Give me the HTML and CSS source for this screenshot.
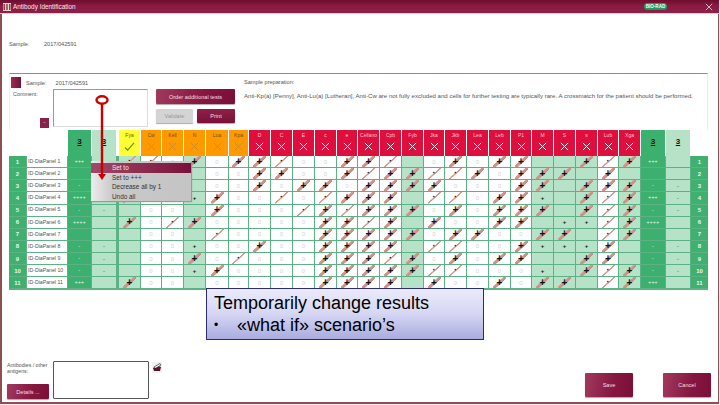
FILE: index.html
```html
<!DOCTYPE html>
<html lang="en">
<head>
<meta charset="utf-8">
<title>Antibody Identification</title>
<link rel="stylesheet" href="styles.css">
</head>
<body>
<svg class="defs" width="0" height="0">
  <symbol id="x" viewBox="0 0 10 10"><path d="M1 1 9 9M9 1 1 9" fill="none" stroke="currentColor" stroke-width="1.1"/></symbol>
</svg>
<div class="window">
  <header class="titlebar">
    <svg class="appicon" viewBox="0 0 8 8"><rect width="8" height="8" fill="#f1d9c9"/><path d="M1.2 1v6M4 1v6M6.8 1v6" stroke="#7d1236" stroke-width="1.2"/></svg>
    <span class="apptitle">Antibody Identification</span>
    <span class="badge">BIO-RAD</span>
    <svg class="close"><use href="#x"/></svg>
  </header>

  <div class="samplebar"><span class="lbl">Sample:</span><span>2017/042591</span></div>

  <section class="panel">
    <div class="left">
      <div class="samplerow"><span class="book"></span><span class="lbl2">Sample:</span><span>2017/042591</span></div>
      <div class="commentrow">
        <div class="commentcol"><span>Comment:</span><span class="minibtn">-</span></div>
        <div class="box commentbox"></div>
        <div class="actions">
          <button class="btn wide">Order additional tests</button>
          <div class="btnrow"><button class="btn off">Validate</button><button class="btn print">Print</button></div>
        </div>
      </div>
    </div>
    <div class="right">
      <div class="preplabel">Sample preparation:</div>
      <p class="preptext">Anti-Kp(a) [Penny], Anti-Lu(a) [Lutheran], Anti-Cw are not fully excluded and cells for further testing are typically rare. A crossmatch for the patient should be performed.</p>
    </div>
  </section>

  <div class="grid head">
    <span></span><span></span>
    <span class="hdark">3</span><span class="hlight">3</span>
    <span class="hy">Fya<svg class="check" viewBox="0 0 12 10"><path d="M1 6 4 9 11 1" fill="none" stroke="#6c9a18" stroke-width="1.5"/></svg></span>
    <span class="ho">Cw<svg><use href="#x"/></svg></span><span class="ho">Kell<svg><use href="#x"/></svg></span><span class="ho">N<svg><use href="#x"/></svg></span><span class="ho">Lua<svg><use href="#x"/></svg></span><span class="ho">Kpa<svg><use href="#x"/></svg></span>
    <span class="hr">D<svg><use href="#x"/></svg></span><span class="hr">C<svg><use href="#x"/></svg></span><span class="hr">E<svg><use href="#x"/></svg></span><span class="hr">c<svg><use href="#x"/></svg></span><span class="hr">e<svg><use href="#x"/></svg></span><span class="hr">Cellano<svg><use href="#x"/></svg></span><span class="hr">Cpb<svg><use href="#x"/></svg></span><span class="hr">Fyb<svg><use href="#x"/></svg></span><span class="hr">Jka<svg><use href="#x"/></svg></span><span class="hr">Jkb<svg><use href="#x"/></svg></span><span class="hr">Lea<svg><use href="#x"/></svg></span><span class="hr">Leb<svg><use href="#x"/></svg></span><span class="hr">P1<svg><use href="#x"/></svg></span><span class="hr">M<svg><use href="#x"/></svg></span><span class="hr">S<svg><use href="#x"/></svg></span><span class="hr">s<svg><use href="#x"/></svg></span><span class="hr">Lub<svg><use href="#x"/></svg></span><span class="hr">Xga<svg><use href="#x"/></svg></span>
    <span class="hdark">3</span><span class="hlight nb">3</span><span></span>
  </div>

  <div class="grid body">
    <i class="n">1</i><i class="nm">ID-DiaPanel 1</i><i class="dk">+++</i><i class="lt"></i><i class="gt">·</i><i class="t">·</i><i class="z">0</i><i class="gs">+</i><i class="z">0</i><i class="s">+</i><i class="s">+</i><i class="t">·</i><i class="z">0</i><i class="z">0</i><i class="s">+</i><i class="s">+</i><i class="t">·</i><i class="e"></i><i class="z">0</i><i class="s">+</i><i class="z">0</i><i class="s">+</i><i class="s">+</i><i class="e"></i><i class="e"></i><i class="gs">+</i><i class="t">·</i><i class="gs">+</i><i class="dk">+++</i><i class="lt nb"></i><i class="n">1</i>
    <i class="n">2</i><i class="nm">ID-DiaPanel 2</i><i class="dk"></i><i class="lt"></i><i class="e"></i><i class="z">0</i><i class="z">0</i><i class="e"></i><i class="z">0</i><i class="z">0</i><i class="s">+</i><i class="s">+</i><i class="z">0</i><i class="z">0</i><i class="s">+</i><i class="t">·</i><i class="s">+</i><i class="gs">+</i><i class="t">·</i><i class="t">·</i><i class="s">+</i><i class="z">0</i><i class="s">+</i><i class="gs">+</i><i class="gs">+</i><i class="e"></i><i class="s">+</i><i class="e"></i><i class="dk"></i><i class="lt nb"></i><i class="n">2</i>
    <i class="n">3</i><i class="nm">ID-DiaPanel 3</i><i class="dk">-</i><i class="lt"></i><i class="e"></i><i class="z">0</i><i class="z">0</i><i class="e"></i><i class="z">0</i><i class="z">0</i><i class="s">+</i><i class="z">0</i><i class="s">+</i><i class="s">+</i><i class="z">0</i><i class="s">+</i><i class="s">+</i><i class="gs">+</i><i class="s">+</i><i class="z">0</i><i class="z">0</i><i class="z">0</i><i class="s">+</i><i class="gs">+</i><i class="e"></i><i class="gs">+</i><i class="s">+</i><i class="gs">+</i><i class="dk">-</i><i class="lt nb">-</i><i class="n">3</i>
    <i class="n">4</i><i class="nm">ID-DiaPanel 4</i><i class="dk">++++</i><i class="lt">-</i><i class="gt">·</i><i class="z">0</i><i class="z">0</i><i class="gp">+</i><i class="s">+</i><i class="z">0</i><i class="z">0</i><i class="t">·</i><i class="z">0</i><i class="t">·</i><i class="s">+</i><i class="s">+</i><i class="s">+</i><i class="e"></i><i class="t">·</i><i class="t">·</i><i class="z">0</i><i class="s">+</i><i class="s">+</i><i class="gp">+</i><i class="e"></i><i class="gs">+</i><i class="t">·</i><i class="gs">+</i><i class="dk">+++</i><i class="lt nb">-</i><i class="n">4</i>
    <i class="n">5</i><i class="nm">ID-DiaPanel 5</i><i class="dk">-</i><i class="lt">-</i><i class="e"></i><i class="z">0</i><i class="z">0</i><i class="e"></i><i class="s">+</i><i class="z">0</i><i class="z">0</i><i class="z">0</i><i class="t">·</i><i class="s">+</i><i class="t">·</i><i class="s">+</i><i class="s">+</i><i class="gs">+</i><i class="z">0</i><i class="s">+</i><i class="z">0</i><i class="s">+</i><i class="s">+</i><i class="gs">+</i><i class="e"></i><i class="gs">+</i><i class="t">·</i><i class="gs">+</i><i class="dk">-</i><i class="lt nb">-</i><i class="n">5</i>
    <i class="n">6</i><i class="nm">ID-DiaPanel 6</i><i class="dk">++++</i><i class="lt"></i><i class="gs">+</i><i class="z">0</i><i class="t">·</i><i class="gs">+</i><i class="z">0</i><i class="z">0</i><i class="z">0</i><i class="z">0</i><i class="z">0</i><i class="s">+</i><i class="s">+</i><i class="t">·</i><i class="s">+</i><i class="e"></i><i class="s">+</i><i class="z">0</i><i class="z">0</i><i class="s">+</i><i class="s">+</i><i class="e"></i><i class="gp">+</i><i class="gp">+</i><i class="t">·</i><i class="gs">+</i><i class="dk">++++</i><i class="lt nb"></i><i class="n">6</i>
    <i class="n">7</i><i class="nm">ID-DiaPanel 7</i><i class="dk"></i><i class="lt"></i><i class="e"></i><i class="z">0</i><i class="z">0</i><i class="e"></i><i class="t">·</i><i class="z">0</i><i class="z">0</i><i class="z">0</i><i class="z">0</i><i class="s">+</i><i class="s">+</i><i class="s">+</i><i class="s">+</i><i class="gs">+</i><i class="z">0</i><i class="s">+</i><i class="s">+</i><i class="z">0</i><i class="z">0</i><i class="gs">+</i><i class="gs">+</i><i class="e"></i><i class="t">·</i><i class="gs">+</i><i class="dk"></i><i class="lt nb"></i><i class="n">7</i>
    <i class="n">8</i><i class="nm">ID-DiaPanel 8</i><i class="dk">-</i><i class="lt">-</i><i class="e"></i><i class="z">0</i><i class="z">0</i><i class="gp">+</i><i class="z">0</i><i class="z">0</i><i class="s">+</i><i class="z">0</i><i class="z">0</i><i class="s">+</i><i class="s">+</i><i class="s">+</i><i class="s">+</i><i class="e"></i><i class="t">·</i><i class="t">·</i><i class="z">0</i><i class="z">0</i><i class="s">+</i><i class="gp">+</i><i class="gp">+</i><i class="gp">+</i><i class="s">+</i><i class="e"></i><i class="dk">-</i><i class="lt nb">-</i><i class="n">8</i>
    <i class="n">9</i><i class="nm">ID-DiaPanel 9</i><i class="dk">-</i><i class="lt">-</i><i class="e"></i><i class="z">0</i><i class="z">0</i><i class="gs">+</i><i class="z">0</i><i class="t">·</i><i class="z">0</i><i class="z">0</i><i class="z">0</i><i class="s">+</i><i class="s">+</i><i class="s">+</i><i class="t">·</i><i class="gs">+</i><i class="z">0</i><i class="s">+</i><i class="z">0</i><i class="s">+</i><i class="s">+</i><i class="e"></i><i class="e"></i><i class="gs">+</i><i class="s">+</i><i class="e"></i><i class="dk">-</i><i class="lt nb">-</i><i class="n">9</i>
    <i class="n">10</i><i class="nm">ID-DiaPanel 10</i><i class="dk">-</i><i class="lt">-</i><i class="e"></i><i class="z">0</i><i class="z">0</i><i class="gp">+</i><i class="s">+</i><i class="z">0</i><i class="z">0</i><i class="z">0</i><i class="z">0</i><i class="s">+</i><i class="s">+</i><i class="s">+</i><i class="s">+</i><i class="gs">+</i><i class="t">·</i><i class="t">·</i><i class="z">0</i><i class="z">0</i><i class="z">0</i><i class="gp">+</i><i class="e"></i><i class="gs">+</i><i class="t">·</i><i class="gs">+</i><i class="dk">-</i><i class="lt nb">-</i><i class="n">10</i>
    <i class="n">11</i><i class="nm">ID-DiaPanel 11</i><i class="dk">+++</i><i class="lt"></i><i class="gs">+</i><i class="z">0</i><i class="z">0</i><i class="e"></i><i class="z">0</i><i class="z">0</i><i class="z">0</i><i class="z">0</i><i class="z">0</i><i class="s">+</i><i class="s">+</i><i class="s">+</i><i class="s">+</i><i class="e"></i><i class="s">+</i><i class="z">0</i><i class="z">0</i><i class="s">+</i><i class="z">0</i><i class="gs">+</i><i class="gs">+</i><i class="e"></i><i class="t">·</i><i class="gs">+</i><i class="dk">+++</i><i class="lt nb"></i><i class="n">11</i>
  </div>

  <footer class="footer">
    <div class="footleft">
      <div class="abl">Antibodies / other antigens:</div>
      <button class="btn details">Details ...</button>
    </div>
    <div class="box antibox"></div>
    <svg class="editicon" viewBox="0 0 10 11"><rect width="10" height="11" fill="#f3f0f0"/><path d="M1 6 5 3.5 9 5 8 9H2Z" fill="#5a1028"/><path d="M2 5 8 1.5 9 3 4 6" fill="#fff" stroke="#333" stroke-width=".7"/></svg>
    <div class="footbtns"><button class="btn big">Save</button><button class="btn big">Cancel</button></div>
  </footer>

  <div class="menu">
    <div class="mi active">Set to</div>
    <div class="mi">Set to +++</div>
    <div class="mi">Decrease all by 1</div>
    <div class="mi">Undo all</div>
  </div>

  <svg class="arrow" viewBox="0 0 16 90">
    <ellipse cx="8" cy="6" rx="5.5" ry="3.7" fill="#fff" stroke="#cc0000" stroke-width="2.4"/>
    <path d="M8 10V82" stroke="#cc0000" stroke-width="2.4"/>
    <path d="M4 80H12L8 86Z" fill="#cc0000"/>
  </svg>

  <div class="callout">
    <div>Temporarily change results</div>
    <div class="bullet"><span class="dot">•</span><span>«what if» scenario’s</span></div>
  </div>
</div>
</body>
</html>
```

FILE: styles.css
```css
* { box-sizing: border-box; }
html, body { margin: 0; padding: 0; }
body { width: 720px; height: 405px; overflow: hidden; background: #f6eeee; font-family: "Liberation Sans", Arial, sans-serif; font-size: 6px; color: #444; }
.defs { position: absolute; }
.window { position: relative; width: 719px; height: 404px; background: #fff; border: 2px solid #8e4f52; border-top: 0; border-right-width: 1px; display: flex; flex-direction: column; }

.titlebar { height: 14px; flex: none; margin-left: -2px; margin-right: -1px; display: flex; align-items: center; padding: 0 6px 0 3px; background: linear-gradient(#6d0d2c, #8a1a42 45%, #8c2149); border-bottom: 1px solid #eec6cf; color: #f4e6ea; }
.appicon { width: 8px; height: 8px; }
.apptitle { margin-left: 2px; font-size: 6.4px; }
.badge { margin-left: auto; width: 23px; height: 7px; border-radius: 4px; background: #1f9c58; color: #fff; font-size: 4.6px; font-weight: bold; line-height: 7px; text-align: center; }
.close { width: 8px; height: 8px; margin-left: 38px; color: #d8d0d4; }

.samplebar { height: 59px; flex: none; display: flex; align-items: center; padding: 1px 0 0 7px; font-size: 5.6px; color: #555; }
.samplebar .lbl { width: 35px; }

.panel { height: 57px; flex: none; margin-left: 7px; width: 699px; border-top: 1px solid #8d8d8d; border-right: 1px solid #f1e8e8; border-left: 1px solid #f4eeee; display: flex; color: #555; }
.left { width: 234px; flex: none; }
.samplerow { height: 15px; display: flex; align-items: center; padding: 2px 0 0 1px; font-size: 5.6px; }
.book { width: 10px; height: 11px; background: linear-gradient(90deg, #9c2c52, #74113a); }
.lbl2 { margin: 0 9px 0 5px; }
.commentrow { display: flex; height: 39px; }
.commentcol { width: 43px; padding: 2px 0 0 3px; display: flex; flex-direction: column; justify-content: space-between; font-size: 5.4px; }
.minibtn { width: 9px; height: 10px; margin: 0 0 0 27px; background: #8a2148; color: #fff; text-align: center; line-height: 9px; }
.box { background: #fff; border: 1px solid #777; border-radius: 1px; }
.commentbox { width: 95px; height: 38px; border-color: #999 #ddd #ddd #999; }
.actions { margin-left: 8px; width: 80px; }
.btn { display: block; padding: 0; border: 0; border-radius: 1px; font-family: inherit; color: #f3dfe6; font-size: 5.6px; background: linear-gradient(100deg, #a13a5e, #86163f 60%, #7a0f39); box-shadow: 0 1px 1px #aaa; }
.wide { width: 79px; height: 15px; }
.btnrow { display: flex; margin-top: 5px; gap: 4px; }
.off { width: 37px; height: 14px; background: #d4d4d4; color: #999; }
.print { width: 38px; height: 14px; background: linear-gradient(#8d2145, #7b1038); }

.right { flex: 1; }
.preplabel { margin-top: 5px; font-size: 5.6px; }
.preptext { margin: 7px 0 0; font-size: 6.08px; white-space: nowrap; }

.grid { display: grid; column-gap: 1px; margin-left: 7px; width: 699px; grid-template-columns: 17px 40px 23px 26px 21px 20px 21px 21px 22px 19px 21px 21px 21px 21px 20px 21px 21px 21px 20px 21px 21px 21px 20px 21px 21px 21px 20px 21px 24px 24px 17px; }
.head { height: 26px; flex: none; grid-template-rows: 26px; }
.head span { display: flex; flex-direction: column; align-items: center; font-size: 5px; color: #6a5020; padding-top: 2px; overflow: hidden; white-space: nowrap; }
.head svg { width: 9px; height: 9px; margin-top: 4px; }
.head .check { width: 11px; height: 9px; }
.hy { background: #ffff33; }
.ho { background: #ff9900; color: #7a5a10; }
.ho svg { color: #c8902a; }
.hr { background: #df0f3d; color: #f7c7d0 !important; }
.hr svg { color: #fff; }
.head .hdark, .head .hlight { font-size: 8px; font-weight: bold; color: #111; text-decoration: underline; padding-top: 7px; }
.hdark { background: #3cb06e; }
.hlight { background: #b6e2c7; border-right: 2px solid #fff; }
.head .nb { border-right: 0; }

.body { flex: none; background: #5db285; grid-template-rows: repeat(11, 11.14px); row-gap: 1px; height: 133.5px; align-content: start; }
.body i { font-style: normal; display: flex; align-items: center; justify-content: center; font-size: 6px; line-height: 1; overflow: hidden; background-color: #fff; }
.body .n { background-color: #3fb06f; color: #e8f6ee; font-weight: bold; }
.body .nm { background-color: #fff; color: #555; justify-content: flex-start; padding-left: 1px; font-size: 5.2px; white-space: nowrap; }
.body .dk { background-color: #3cb06e; color: #eaf7ef; font-size: 5px; letter-spacing: .3px; }
.body .lt { background-color: #b6e2c7; color: #555; border-right: 2px solid #5db285; }
.body .nb { border-right: 0; }
.body .z { color: #d4d4d4; }
.body .e { background-color: #b6e2c7; }
.body .gp { background-color: #b6e2c7; color: #111; font-weight: bold; }
.body .s, .body .t, .body .gs, .body .gt { color: #111; font-weight: bold; background-repeat: no-repeat; background-position: center; background-size: 13px 12px; }
.body .s, .body .gs { font-size: 10px; background-image: linear-gradient(to bottom right, transparent 40%, #d69a90 43%, #c98a84 57%, transparent 60%); }
.body .t, .body .gt { font-size: 9px; background-image: linear-gradient(to bottom right, transparent 45%, #d89890 47%, #d89890 53%, transparent 55%); }
.body .gs, .body .gt { background-color: #b6e2c7; }

.footer { flex: 1; display: flex; align-items: flex-start; margin-top: 71px; padding-left: 5px; }
.footleft { width: 46px; color: #555; font-size: 5.2px; line-height: 6.4px; }
.abl { margin-top: 1px; width: 44px; }
.details { width: 42px; height: 15px; margin-top: 10px; }
.antibox { width: 96px; height: 38px; border-color: #555; }
.editicon { width: 10px; height: 11px; margin: 1px 0 0 3px; }
.footbtns { margin-left: auto; display: flex; gap: 30px; padding: 12px 7px 0 0; }
.big { width: 48px; height: 24px; }

.menu { position: absolute; left: 89px; top: 161px; width: 100px; height: 40px; padding: 2px 0; background: linear-gradient(90deg, #ececec, #c9c9c9 22%, #c4c4c4); box-shadow: 1px 1px 1px #999; color: #333; font-size: 6.4px; }
.mi { height: 9.5px; line-height: 9.5px; padding-left: 21px; }
.mi.active { background: linear-gradient(90deg, #a04a68, #7a1039); color: #f5e6ea; }

.arrow { position: absolute; left: 92px; top: 94px; width: 16px; height: 90px; }

.callout { position: absolute; left: 204px; top: 288px; width: 278px; height: 52px; padding: 3px 7px; border: 1px solid #2c2c72; background: linear-gradient(#ebebfc, #d5d6f3 50%, #a9acdf); color: #000; font-size: 18px; line-height: 22px; }
.bullet { display: flex; }
.dot { width: 23px; font-size: 12px; }
```
